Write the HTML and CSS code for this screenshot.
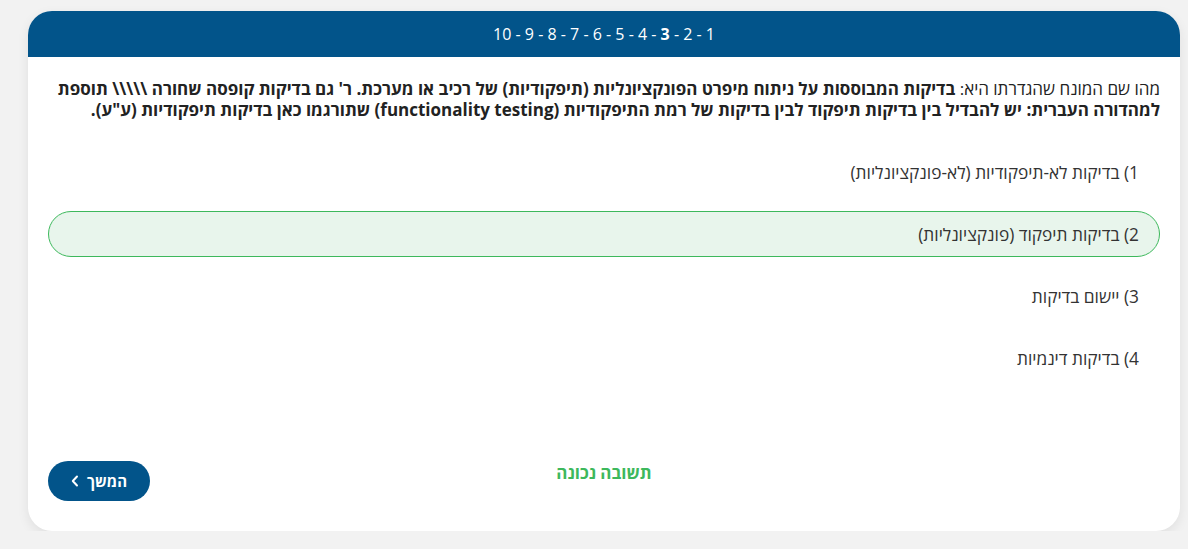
FILE: index.html
```html
<!DOCTYPE html>
<html lang="he" dir="rtl">
<head>
    <meta charset="UTF-8">
    <meta name="viewport" content="width=device-width, initial-scale=1.0">
    <title>שאלה 3</title>
    <link rel="stylesheet" href="styles.css">
</head>
<body>
    <div class="card">
        <div class="card-header">
            <span class="steps">1 - 2 - <b>3</b> - 4 - 5 - 6 - 7 - 8 - 9 - 10</span>
        </div>
        <div class="card-body">
            <p class="question">מהו שם המונח שהגדרתו היא: <b>בדיקות המבוססות על ניתוח מיפרט הפונקציונליות (תיפקודיות) של רכיב או מערכת. ר' גם בדיקות קופסה שחורה \\\\\ תוספת למהדורה העברית: יש להבדיל בין בדיקות תיפקוד לבין בדיקות של רמת התיפקודיות (functionality testing) שתורגמו כאן בדיקות תיפקודיות (ע"ע).</b></p>

            <ul class="answers">
                <li class="answer">1) בדיקות לא-תיפקודיות (לא-פונקציונליות)</li>
                <li class="answer correct">2) בדיקות תיפקוד (פונקציונליות)</li>
                <li class="answer">3) יישום בדיקות</li>
                <li class="answer">4) בדיקות דינמיות</li>
            </ul>

            <div class="card-footer">
                <span class="feedback">תשובה נכונה</span>
                <button class="next-btn">המשך
                    <svg class="chevron" width="8" height="12" viewBox="0 0 8 12"><path d="M6 1.5 L1.8 6 L6 10.5" fill="none" stroke="#fff" stroke-width="2" stroke-linecap="round" stroke-linejoin="round"/></svg>
                </button>
            </div>
        </div>
    </div>
</body>
</html>
```

FILE: styles.css
```css
body {
    font-family: "Open Sans", "DejaVu Sans", sans-serif;
    margin: 0;
    padding: 11px 8px 0 28px;
    background-color: #f2f2f2;
    color: #222;
}

.card {
    background: #fff;
    border-radius: 24px;
    box-shadow: 0 4px 12px rgba(0, 0, 0, 0.08);
    overflow: hidden;
}

.card-header {
    height: 46px;
    background-color: #02548a;
    color: #fff;
    display: flex;
    align-items: center;
    justify-content: center;
    font-size: 16px;
    font-weight: 400;
}

.steps b {
    font-weight: 700;
}

.card-body {
    padding: 21px 20px 30px;
}

.question {
    margin: 0;
    font-size: 17px;
    line-height: 21px;
}

.answers {
    list-style: none;
    margin: 29px 0 0;
    padding: 0;
    display: flex;
    flex-direction: column;
    gap: 16px;
}

.answer {
    height: 46px;
    box-sizing: border-box;
    display: flex;
    align-items: center;
    padding: 0 20px;
    border: 1px solid transparent;
    border-radius: 23px;
    font-size: 17.3px;
    color: #333;
}

.answer.correct {
    background-color: #e8f5ec;
    border-color: #3db85c;
}

.card-footer {
    margin-top: 80px;
    display: grid;
    grid-template-columns: 1fr auto 1fr;
    align-items: start;
}

.feedback {
    grid-column: 2;
    color: #3db85c;
    font-weight: 700;
    font-size: 17px;
    line-height: 22px;
    padding-top: 1px;
}

.next-btn {
    grid-column: 3;
    justify-self: end;
    height: 40px;
    width: 102px;
    display: flex;
    align-items: center;
    justify-content: center;
    gap: 8px;
    background-color: #02548a;
    color: #fff;
    border: none;
    border-radius: 20px;
    font-family: inherit;
    font-weight: 700;
    font-size: 15px;
    cursor: pointer;
}

.chevron {
    display: block;
}
```
